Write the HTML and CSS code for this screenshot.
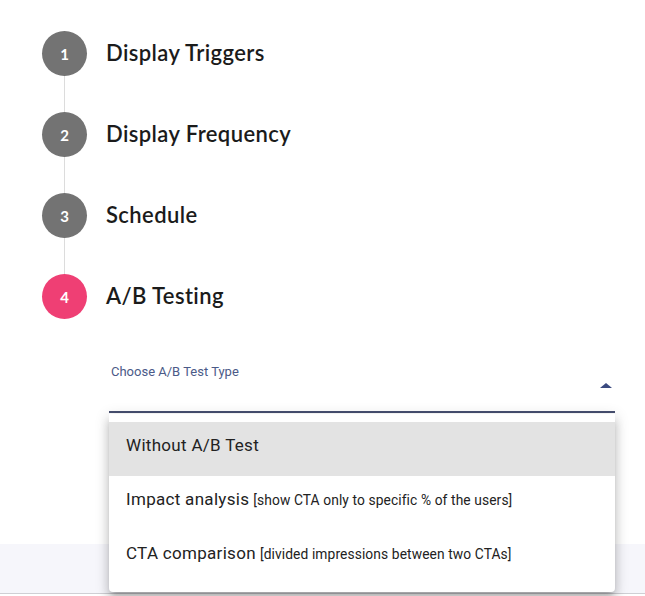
FILE: index.html
```html
<!DOCTYPE html>
<html lang="en">
<head>
<meta charset="utf-8">
<title>A/B Testing</title>
<link rel="stylesheet" href="styles.css">
</head>
<body>
<div class="page">
  <ol class="steps">
    <li class="step">
      <div class="rail"><span class="circle">1</span><span class="connector"></span></div>
      <span class="title">Display Triggers</span>
    </li>
    <li class="step">
      <div class="rail"><span class="circle">2</span><span class="connector"></span></div>
      <span class="title">Display Frequency</span>
    </li>
    <li class="step">
      <div class="rail"><span class="circle">3</span><span class="connector"></span></div>
      <span class="title">Schedule</span>
    </li>
    <li class="step step-active">
      <div class="rail"><span class="circle">4</span></div>
      <span class="title">A/B Testing</span>
    </li>
  </ol>

  <div class="field">
    <label class="field-label">Choose A/B Test Type</label>
    <div class="select">
      <span class="arrow"></span>
      <ul class="menu">
        <li class="menu-item selected">Without A/B Test</li>
        <li class="menu-item">Impact analysis <small class="hint">[show CTA only to specific % of the users]</small></li>
        <li class="menu-item">CTA comparison <small class="hint">[divided impressions between two CTAs]</small></li>
      </ul>
    </div>
  </div>

  <div class="band"></div>
</div>
</body>
</html>
```

FILE: styles.css
```css
* { box-sizing: border-box; }

html, body {
  margin: 0;
  padding: 0;
  background: #ffffff;
}

body {
  font-family: "Lato", "Open Sans", sans-serif;
  color: #1e1e1e;
  width: 645px;
  height: 596px;
  overflow: hidden;
}

.page {
  display: flex;
  flex-direction: column;
  padding-top: 31px;
}

.steps {
  list-style: none;
  margin: 0;
  padding: 0 0 0 42px;
  display: flex;
  flex-direction: column;
}

.step {
  display: flex;
  align-items: flex-start;
}

.rail {
  display: flex;
  flex-direction: column;
  align-items: center;
  width: 45px;
}

.circle {
  width: 45px;
  height: 45px;
  border-radius: 50%;
  background: #737373;
  color: #ffffff;
  font-family: "Lato", sans-serif;
  font-weight: 700;
  font-size: 15px;
  display: flex;
  align-items: center;
  justify-content: center;
}

.step-active .circle {
  background: #ef3f74;
}

.connector {
  width: 1px;
  height: 36px;
  background: #dcdcdc;
}

.title {
  margin-left: 19px;
  height: 45px;
  line-height: 44px;
  font-size: 22px;
  font-weight: 600;
  letter-spacing: 0.4px;
  color: #1b1b1b;
}

.field {
  margin: 45px 0 0 109px;
  width: 506px;
  display: flex;
  flex-direction: column;
}

.field-label {
  font-family: "Roboto", sans-serif;
  font-size: 13px;
  line-height: 16px;
  color: #4b5a88;
  padding-left: 2px;
}

.select {
  position: relative;
  height: 33px;
  border-bottom: 2px solid #474f70;
  display: flex;
  justify-content: flex-end;
  align-items: flex-start;
}

.arrow {
  width: 0;
  height: 0;
  border-left: 6px solid transparent;
  border-right: 6px solid transparent;
  border-bottom: 5px solid #3b4a80;
  margin: 3px 3px 0 0;
}

.menu {
  position: absolute;
  left: 0;
  right: 0;
  top: 34px;
  margin: 0;
  padding: 8px 0;
  list-style: none;
  background: #ffffff;
  border-radius: 0 0 4px 4px;
  box-shadow: 0 5px 5px -3px rgba(0,0,0,0.2), 0 8px 10px 1px rgba(0,0,0,0.14), 0 3px 14px 2px rgba(0,0,0,0.12);
  z-index: 2;
}

.menu-item {
  height: 54px;
  display: flex;
  align-items: center;
  padding: 0 0 8px 17px;
  font-family: "Roboto", sans-serif;
  font-size: 17px;
  letter-spacing: 0.3px;
  color: #222222;
  white-space: nowrap;
}

.menu-item.selected {
  background: #e3e3e3;
}

.hint {
  font-family: "Roboto", sans-serif;
  font-size: 13.8px;
  font-weight: 400;
  letter-spacing: 0.1px;
  margin-left: 4px;
  color: #222222;
  padding-top: 2px;
}

.band {
  margin-top: 131px;
  height: 50px;
  background: #f6f6fb;
  border-bottom: 1px solid #cfcfd4;
}
```
